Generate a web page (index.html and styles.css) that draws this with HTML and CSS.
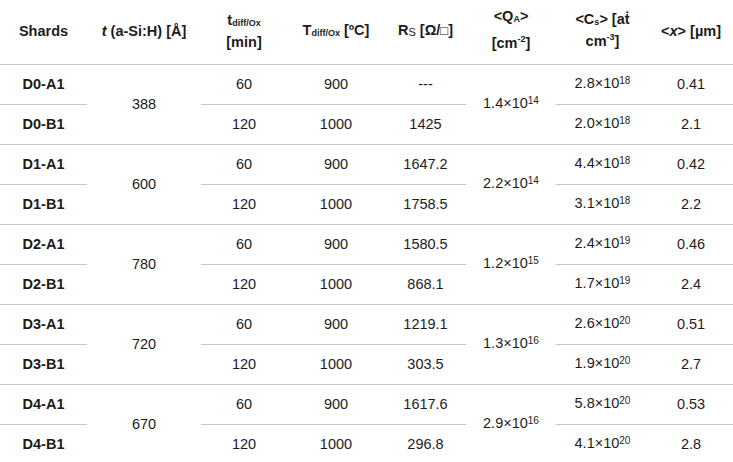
FILE: index.html
```html
<!DOCTYPE html>
<html>
<head>
<meta charset="utf-8">
<link rel="stylesheet" href="styles.css">
</head>
<body>
<table class="data">
  <colgroup>
    <col class="c1"><col class="c2"><col class="c3"><col class="c4"><col class="c5"><col class="c6"><col class="c7"><col class="c8">
  </colgroup>
  <thead>
    <tr>
      <th>Shards</th>
      <th><i>t</i> (a-Si:H) [Å]</th>
      <th class="two">t<sub class="sm">diff/Ox</sub><br>[min]</th>
      <th>T<sub class="sm">diff/Ox</sub> [ºC]</th>
      <th>R<sub class="rs">S</sub> [Ω/<span class="sq">□</span>]</th>
      <th class="qa">&lt;Q<sub class="sm">A</sub>&gt;<br>[cm<sup class="hs">-2</sup>]</th>
      <th class="two">&lt;C<sub class="sm">s</sub>&gt; [aṫ<br>cm<sup class="hs">-3</sup>]</th>
      <th>&lt;<i>x</i>&gt; [µm]</th>
    </tr>
  </thead>
  <tbody>
    <tr class="first">
      <td class="id">D0-A1</td><td rowspan="2" class="merge">388</td><td>60</td><td>900</td><td>---</td>
      <td rowspan="2" class="merge">1.4×10<sup>14</sup></td><td>2.8×10<sup>18</sup></td><td>0.41</td>
    </tr>
    <tr class="second">
      <td class="id">D0-B1</td><td>120</td><td>1000</td><td>1425</td><td>2.0×10<sup>18</sup></td><td>2.1</td>
    </tr>
    <tr class="first">
      <td class="id">D1-A1</td><td rowspan="2" class="merge">600</td><td>60</td><td>900</td><td>1647.2</td>
      <td rowspan="2" class="merge">2.2×10<sup>14</sup></td><td>4.4×10<sup>18</sup></td><td>0.42</td>
    </tr>
    <tr class="second">
      <td class="id">D1-B1</td><td>120</td><td>1000</td><td>1758.5</td><td>3.1×10<sup>18</sup></td><td>2.2</td>
    </tr>
    <tr class="first">
      <td class="id">D2-A1</td><td rowspan="2" class="merge">780</td><td>60</td><td>900</td><td>1580.5</td>
      <td rowspan="2" class="merge">1.2×10<sup>15</sup></td><td>2.4×10<sup>19</sup></td><td>0.46</td>
    </tr>
    <tr class="second">
      <td class="id">D2-B1</td><td>120</td><td>1000</td><td>868.1</td><td>1.7×10<sup>19</sup></td><td>2.4</td>
    </tr>
    <tr class="first">
      <td class="id">D3-A1</td><td rowspan="2" class="merge">720</td><td>60</td><td>900</td><td>1219.1</td>
      <td rowspan="2" class="merge">1.3×10<sup>16</sup></td><td>2.6×10<sup>20</sup></td><td>0.51</td>
    </tr>
    <tr class="second">
      <td class="id">D3-B1</td><td>120</td><td>1000</td><td>303.5</td><td>1.9×10<sup>20</sup></td><td>2.7</td>
    </tr>
    <tr class="first">
      <td class="id">D4-A1</td><td rowspan="2" class="merge">670</td><td>60</td><td>900</td><td>1617.6</td>
      <td rowspan="2" class="merge">2.9×10<sup>16</sup></td><td>5.8×10<sup>20</sup></td><td>0.53</td>
    </tr>
    <tr class="second">
      <td class="id">D4-B1</td><td>120</td><td>1000</td><td>296.8</td><td>4.1×10<sup>20</sup></td><td>2.8</td>
    </tr>
  </tbody>
</table>
</body>
</html>
```

FILE: styles.css
```css
html, body {
  margin: 0;
  padding: 0;
  background: #ffffff;
}

.data {
  width: 733px;
  table-layout: fixed;
  border-collapse: collapse;
  font-family: "Liberation Sans", Arial, sans-serif;
  font-size: 14.5px;
  color: #1c1c1c;
}

.c1 { width: 87px; }
.c2 { width: 114px; }
.c3 { width: 86px; }
.c4 { width: 98px; }
.c5 { width: 81px; }
.c6 { width: 90px; }
.c7 { width: 93px; }
.c8 { width: 84px; }

.data th,
.data td {
  padding: 0;
  text-align: center;
  vertical-align: middle;
}

.data thead tr {
  height: 64px;
}

.data th {
  font-weight: bold;
  line-height: 20px;
  border-bottom: 1px solid #c6c6c6;
  padding-bottom: 2px;
}

.data th.two {
  line-height: 20px;
}

.data th.qa {
  line-height: 25px;
}

.data tbody tr {
  height: 40px;
}

.data td {
  line-height: 16px;
  border-bottom: 1px solid #c6c6c6;
}

.data tbody tr:last-child td,
.data tbody tr:nth-last-child(2) td.merge {
  border-bottom: none;
}

.data td.id {
  font-weight: bold;
}

.sm {
  font-size: 9px;
  vertical-align: baseline;
  position: relative;
  top: 1px;
}

.rs {
  font-size: 11px;
  font-weight: normal;
  vertical-align: baseline;
  position: relative;
  top: 1px;
}

.sq {
  font-weight: normal;
  font-size: 13px;
}

.hs {
  font-size: 9px;
  vertical-align: baseline;
  position: relative;
  top: -6px;
}

.data td sup {
  font-size: 10px;
  vertical-align: baseline;
  position: relative;
  top: -4px;
}
```
